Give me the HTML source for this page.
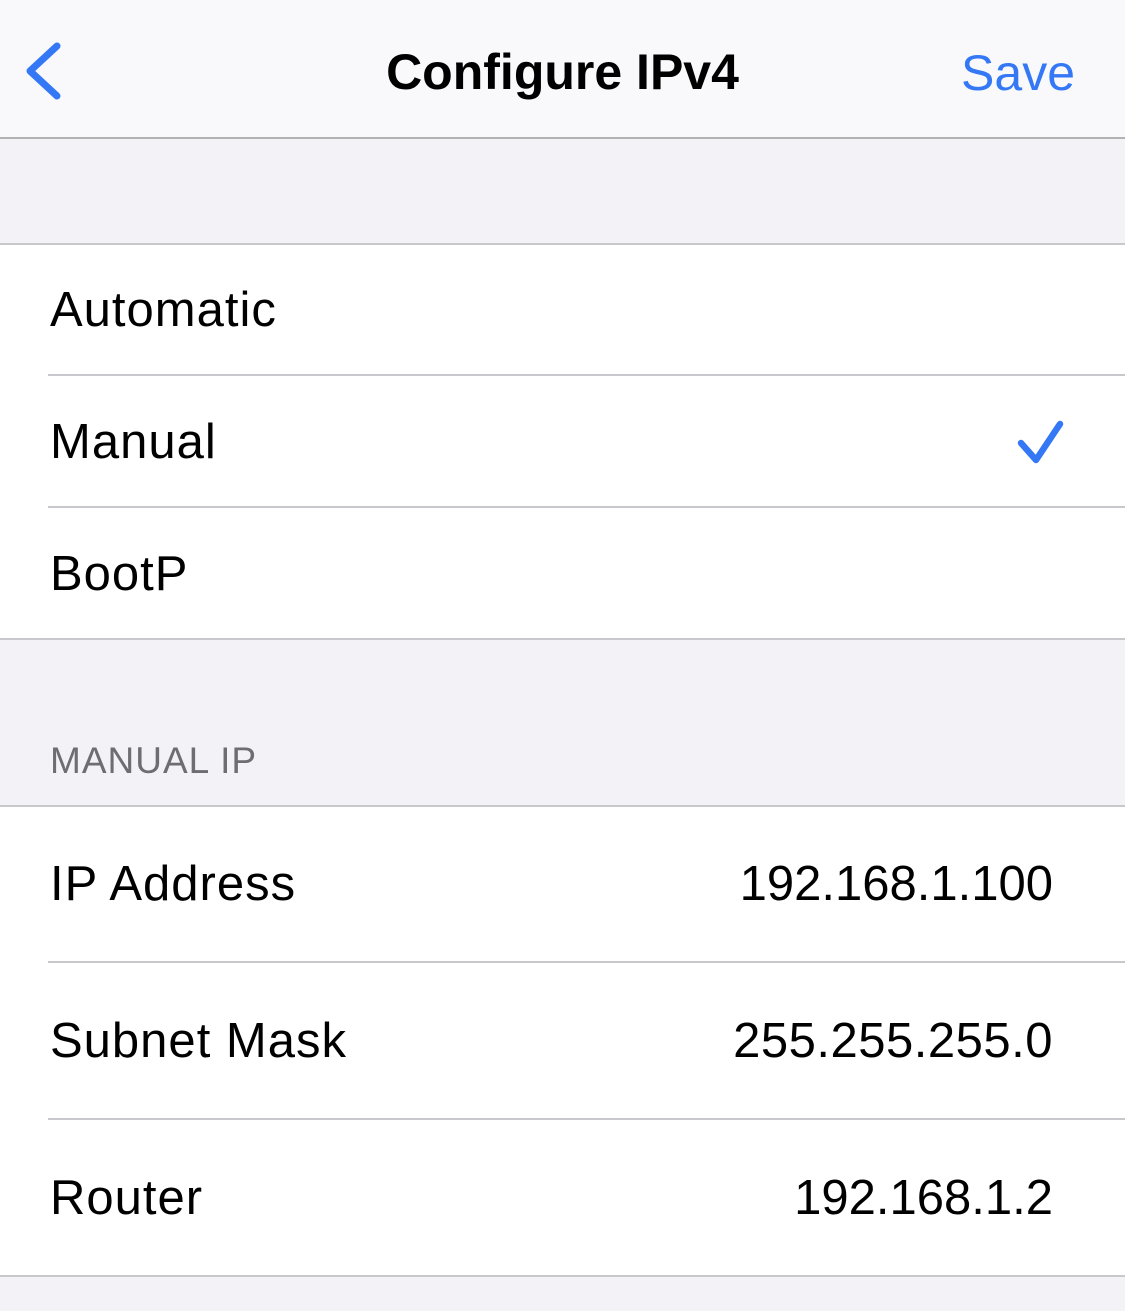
<!DOCTYPE html>
<html><head><style>
body{margin:0;width:1125px;height:1311px;background:#f2f2f7;font-family:"Liberation Sans",sans-serif;position:relative;overflow:hidden}
.a{position:absolute;left:0;width:1125px}
.t{position:absolute;font-size:49px;color:#000;white-space:nowrap}
.l{letter-spacing:1px}
.line{position:absolute;height:1.5px;background:#c8c7cc}
</style></head><body>
<div class="a" style="top:0;height:137px;background:#f9f9fb"></div>
<div class="line" style="left:0;width:1125px;top:137px;background:#b2b2b2"></div>
<svg style="position:absolute;left:0;top:0" width="120" height="137"><path d="M57 46 L30 71 L57 96" fill="none" stroke="#3478f6" stroke-width="7" stroke-linecap="round" stroke-linejoin="round"/></svg>
<div class="t" style="left:0;width:1125px;text-align:center;top:43px;font-weight:bold;font-size:50px">Configure IPv4</div>
<div class="t" style="right:50px;top:44px;color:#3478f6;font-size:50px">Save</div>

<div class="a" style="top:244px;height:394px;background:#fff"></div>
<div class="line" style="left:0;width:1125px;top:243px"></div>
<div class="line" style="left:48px;width:1077px;top:374px"></div>
<div class="line" style="left:48px;width:1077px;top:506px"></div>
<div class="line" style="left:0;width:1125px;top:638px"></div>
<div class="t l" style="left:50px;top:282px">Automatic</div>
<div class="t l" style="left:50px;top:414px">Manual</div>
<div class="t l" style="left:50px;top:546px">BootP</div>
<svg style="position:absolute;left:1000px;top:405px" width="80" height="80"><path d="M21 38 L36 55 L60 19" fill="none" stroke="#3478f6" stroke-width="6.5" stroke-linecap="round" stroke-linejoin="round"/></svg>

<div class="t" style="left:50px;top:740px;font-size:37px;color:#6d6d72;letter-spacing:1px">MANUAL IP</div>
<div class="a" style="top:806px;height:469px;background:#fff"></div>
<div class="line" style="left:0;width:1125px;top:805px"></div>
<div class="line" style="left:48px;width:1077px;top:961px"></div>
<div class="line" style="left:48px;width:1077px;top:1118px"></div>
<div class="line" style="left:0;width:1125px;top:1275px"></div>
<div class="t l" style="left:50px;top:856px">IP Address</div>
<div class="t" style="right:72px;top:856px">192.168.1.100</div>
<div class="t l" style="left:50px;top:1013px">Subnet Mask</div>
<div class="t" style="right:72px;top:1013px;letter-spacing:0.5px">255.255.255.0</div>
<div class="t l" style="left:50px;top:1170px">Router</div>
<div class="t" style="right:72px;top:1170px">192.168.1.2</div>
</body></html>
